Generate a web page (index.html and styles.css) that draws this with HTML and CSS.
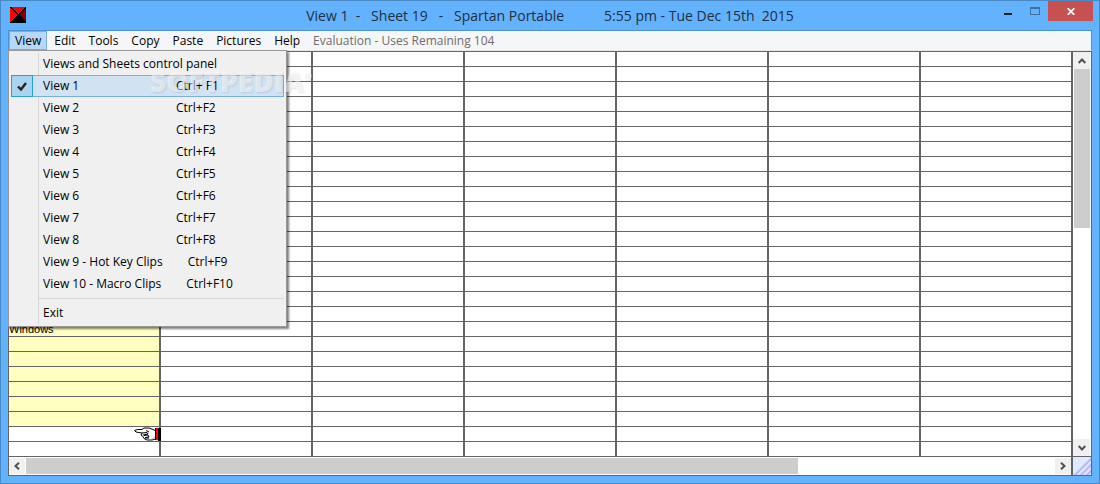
FILE: index.html
```html
<!DOCTYPE html>
<html lang="en">
<head>
    <meta charset="utf-8">
    <title>Spartan Portable</title>
    <link rel="stylesheet" href="styles.css">
</head>
<body>
    <div class="window">
        <header class="titlebar">
            <svg class="app-icon" width="16" height="16" viewBox="0 0 16 16" shape-rendering="crispEdges">
                <rect width="16" height="16" fill="#000"/>
                <path d="M1 0H15L8 7Z" fill="#f00"/>
                <path d="M0 1L7 8L0 15Z" fill="#f00"/>
                <path d="M16 1L9 8L16 15Z" fill="#800000"/>
            </svg>
            <h1 class="title">View 1  -   Sheet 19   -   Spartan Portable           5:55 pm - Tue Dec 15th  2015</h1>
            <div class="controls">
                <button class="minimize" aria-label="Minimize"><svg width="8" height="2"><rect width="8" height="2" fill="#1e1e1e"/></svg></button>
                <button class="maximize" aria-label="Maximize" disabled><svg width="10" height="8" shape-rendering="crispEdges"><path d="M0 0H10V8H0ZM1 2V7H9V2Z" fill="#40709f" fill-rule="evenodd"/></svg></button>
                <button class="close" aria-label="Close"><svg width="8" height="7" viewBox="0 0 8 7"><path d="M.7 .2L7.3 6.8M7.3 .2L.7 6.8" stroke="#fff" stroke-width="1.8"/></svg></button>
            </div>
        </header>

        <nav class="menubar">
            <div class="menu">
                <button class="open">View</button>
                <div class="dropdown">
                    <button><span class="check"></span><span>Views and Sheets control panel</span></button>
                    <button class="selected"><span class="check"><svg width="10" height="9" viewBox="0 0 10 9"><path d="M1 4.5L4 7.5L9 1" fill="none" stroke="#222" stroke-width="2.4"/></svg></span><span class="label">View 1</span><span>Ctrl+ F1</span></button>
                    <button><span class="check"></span><span class="label">View 2</span><span>Ctrl+F2</span></button>
                    <button><span class="check"></span><span class="label">View 3</span><span>Ctrl+F3</span></button>
                    <button><span class="check"></span><span class="label">View 4</span><span>Ctrl+F4</span></button>
                    <button><span class="check"></span><span class="label">View 5</span><span>Ctrl+F5</span></button>
                    <button><span class="check"></span><span class="label">View 6</span><span>Ctrl+F6</span></button>
                    <button><span class="check"></span><span class="label">View 7</span><span>Ctrl+F7</span></button>
                    <button><span class="check"></span><span class="label">View 8</span><span>Ctrl+F8</span></button>
                    <button><span class="check"></span><span class="label">View 9 - Hot Key Clips</span><span>Ctrl+F9</span></button>
                    <button><span class="check"></span><span class="label">View 10 - Macro Clips</span><span>Ctrl+F10</span></button>
                    <hr>
                    <button><span class="check"></span><span>Exit</span></button>
                    <div class="watermark">SOFTPEDIA<sup>®</sup></div>
                </div>
            </div>
            <button>Edit</button>
            <button>Tools</button>
            <button>Copy</button>
            <button>Paste</button>
            <button>Pictures</button>
            <button>Help</button>
            <button disabled>Evaluation - Uses Remaining 104</button>
        </nav>

        <main class="client">
            <table id="sheet"><tbody></tbody></table>
            <div class="vscroll">
                <button aria-label="Scroll up"><svg width="8" height="6" viewBox="0 0 8 6"><path d="M.7 5L4 1.5L7.3 5" fill="none" stroke="#505050" stroke-width="2"/></svg></button>
                <div class="track"><div class="thumb"></div></div>
                <button aria-label="Scroll down"><svg width="8" height="6" viewBox="0 0 8 6"><path d="M.7 1L4 4.5L7.3 1" fill="none" stroke="#505050" stroke-width="2"/></svg></button>
            </div>
            <div class="hscroll">
                <button aria-label="Scroll left"><svg width="6" height="8" viewBox="0 0 6 8"><path d="M5 .7L1.5 4L5 7.3" fill="none" stroke="#505050" stroke-width="2"/></svg></button>
                <div class="track"><div class="thumb"></div></div>
                <button aria-label="Scroll right"><svg width="6" height="8" viewBox="0 0 6 8"><path d="M1 .7L4.5 4L1 7.3" fill="none" stroke="#505050" stroke-width="2"/></svg></button>
            </div>
            <svg class="grip" width="18" height="18" viewBox="0 0 18 18">
                <rect width="18" height="18" fill="#dce9ff"/>
                <path d="M1 19L19 1M7 19L19 7M13 19L19 13" stroke="#b9b9f2" stroke-width="2"/>
            </svg>
        </main>
    </div>

    <template id="hand">
        <svg class="hand" width="27" height="14" viewBox="0 0 27 14">
            <path d="M.5 3.5Q3 2 8 2.5L10 1H15L19 2.5L22 4V12L18 13H13L10 11.5L9 9.5L7 8L8 6L2 5Z" fill="#fff" stroke="#000"/>
            <path d="M8 6L13 5.5L14 7L9 8M10 8.5L14 8L15 10L11 10.5M11 11L15 11M12 3.5L15 5" fill="none" stroke="#000"/>
            <path d="M18 12L21 10" stroke="#bbb"/>
            <rect x="21" y="1" width="1" height="12" fill="#000"/>
            <rect x="22" y="1" width="2" height="12" fill="#f00"/>
            <rect x="24" y="1" width="3" height="13" fill="#000"/>
        </svg>
    </template>
    <script src="sheet.js"></script>
</body>
</html>
```
FILE: styles.css
```css
* {
    box-sizing: border-box;
}

body {
    margin: 0;
    background: #63b2fd;
    font-family: "Open Sans", "Noto Sans", sans-serif;
    font-size: 12px;
    color: #000;
}

button {
    display: flex;
    align-items: center;
    border: none;
    padding: 0;
    background: none;
    font: inherit;
    color: inherit;
    white-space: nowrap;
}

svg {
    display: block;
}

.window {
    min-height: 100vh;
    border: 1px solid #4888c4;
    padding: 0 7px 7px;
    background: #63b2fd;
}

/* title bar */
.titlebar {
    display: grid;
    grid-template-columns: 1fr auto 1fr;
    height: 29px;
}

.app-icon {
    margin: 6px 0 0 2px;
}

.title {
    margin: 0;
    font-size: 14px;
    font-weight: normal;
    line-height: 29px;
    white-space: pre;
    color: #1f2f3f;
}

.controls {
    display: flex;
    justify-content: flex-end;
    align-items: flex-start;
    margin-right: -1px;
}

.controls button {
    justify-content: center;
    width: 27px;
    height: 20px;
}

.controls .minimize {
    padding-top: 6px;
}

.controls .close {
    width: 45px;
    background: #c75050;
}

/* menu bar */
.menubar {
    display: flex;
    height: 21px;
    border: 1px solid #4b93d6;
    border-bottom: 1px solid #e8e8e8;
    background: #f5f6f7;
}

.menubar > button {
    height: 19px;
    padding: 0 6px 0 7px;
}

.menubar > button:disabled {
    color: #6d6d6d;
}

.menu {
    position: relative;
}

.menu .open {
    height: 19px;
    padding: 0 5px;
    border: 1px solid #78aee5;
    background: #b5d7f8;
}

.dropdown {
    position: absolute;
    z-index: 1;
    top: 19px;
    left: -1px;
    width: 279px;
    padding: 2px;
    border: 1px solid #979797;
    background: linear-gradient(#d7d7d7, #d7d7d7) 29px 2px / 1px 271px no-repeat #f0f0f0;
    box-shadow: 2px 2px 2px rgba(0, 0, 0, 0.5);
}

.dropdown button {
    width: 100%;
    height: 22px;
    border: 1px solid transparent;
    line-height: 16px;
}

.dropdown .selected {
    border-color: #78aee5;
    background: #d1e2f2;
}

.check {
    display: flex;
    justify-content: center;
    align-items: center;
    width: 22px;
    height: 22px;
    margin: -1px 10px -1px -1px;
    border: 1px solid transparent;
}

.selected .check {
    border-color: #26a0da;
    background: #a9d3ef;
}

.label {
    min-width: 133px;
    padding-right: 25px;
    text-align: left;
}

.dropdown hr {
    height: 1px;
    margin: 3px 0 3px 27px;
    border: none;
    background: #d7d7d7;
}

.watermark {
    position: absolute;
    top: 14px;
    left: 141px;
    font: 800 28px/32px "Open Sans", sans-serif;
    color: rgba(255, 255, 255, 0.5);
    text-shadow: 1px 1px 2px rgba(0, 0, 0, 0.1);
    pointer-events: none;
}

.watermark sup {
    font-size: 10px;
    line-height: 10px;
    vertical-align: 12px;
}

/* sheet */
.client {
    display: grid;
    grid-template-columns: 1fr 18px;
    border: 1px solid #646464;
    background: #fff;
}

#sheet {
    width: 100%;
    table-layout: fixed;
    border-spacing: 0;
    border-collapse: separate;
}

#sheet td {
    height: 15px;
    padding: 0;
    border-right: 2px solid #646464;
    border-bottom: 1px solid #646464;
    font: 11px/14px "Liberation Sans", sans-serif;
}

#sheet .filled {
    background: #ffffc0;
}

.hand {
    margin: 0 -2px 0 auto;
}

/* scroll bars */
.vscroll {
    display: flex;
    flex-direction: column;
    border-bottom: 1px solid #646464;
}

.hscroll {
    display: flex;
    height: 18px;
    border-right: 2px solid #646464;
    padding: 1px 0;
}

.vscroll button,
.hscroll button {
    justify-content: center;
    background: #f0f0f0;
}

.vscroll button {
    width: 17px;
    height: 17px;
}

.hscroll button {
    width: 16px;
    height: 16px;
}

.track {
    flex: 1;
}

.hscroll .track {
    padding-left: 1px;
}

.thumb {
    background: #cdcdcd;
}

.vscroll .thumb {
    width: 16px;
    height: 43%;
    margin-left: 1px;
}

.hscroll .thumb {
    width: 75%;
    height: 16px;
}
```
FILE: sheet.js
```javascript
const ROWS = 27;
const COLS = 7;
const FILLED_ROWS = 25;
const HAND_ROW = 25;
const entries = { 18: "Windows" };

const body = document.querySelector("#sheet tbody");

for (let r = 0; r < ROWS; r++) {
    const row = body.insertRow();
    for (let c = 0; c < COLS; c++) {
        row.insertCell();
    }
    const first = row.cells[0];
    if (r < FILLED_ROWS) {
        first.className = "filled";
    }
    if (entries[r]) {
        first.textContent = entries[r];
    }
    if (r === HAND_ROW) {
        first.append(document.getElementById("hand").content.cloneNode(true));
    }
}
```
